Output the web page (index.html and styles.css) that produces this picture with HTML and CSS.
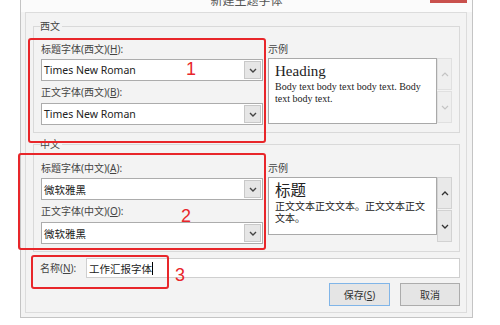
FILE: index.html
```html
<!DOCTYPE html>
<html lang="zh-CN">
<head>
  <meta charset="UTF-8">
  <title>新建主题字体</title>
  <link rel="stylesheet" href="styles.css">
</head>
<body>
  <div class="window">
    <div class="titlebar">
      <span></span>
      <span class="title">新建主题字体</span>
      <span class="close"></span>
    </div>

    <div class="panel">
      <!-- 西文 -->
      <div class="group group-latin">
        <div class="group-head"><span class="group-title">西文</span></div>
        <div class="group-body">
          <div class="fields">
            <div class="field-label">标题字体(西文)(<u>H</u>):</div>
            <div class="select">
              <span class="select-value">Times New Roman</span>
              <span class="drop"><svg width="8" height="5" viewBox="0 0 8 5"><path d="M1 1 L4 4 L7 1" fill="none" stroke="#444" stroke-width="1.4"/></svg></span>
            </div>
            <div class="field-label">正文字体(西文)(<u>B</u>):</div>
            <div class="select">
              <span class="select-value">Times New Roman</span>
              <span class="drop"><svg width="8" height="5" viewBox="0 0 8 5"><path d="M1 1 L4 4 L7 1" fill="none" stroke="#444" stroke-width="1.4"/></svg></span>
            </div>
          </div>
          <div class="sample">
            <div class="field-label">示例</div>
            <div class="sample-row">
              <div class="sample-box serif">
                <div class="sample-head">Heading</div>
                <div class="sample-body">Body text body text body text. Body text body text.</div>
              </div>
              <div class="scroll disabled">
                <span class="scroll-btn"><svg width="8" height="5" viewBox="0 0 8 5"><path d="M1 4 L4 1 L7 4" fill="none" stroke="currentColor" stroke-width="1.2"/></svg></span>
                <span class="scroll-btn"><svg width="8" height="5" viewBox="0 0 8 5"><path d="M1 1 L4 4 L7 1" fill="none" stroke="currentColor" stroke-width="1.2"/></svg></span>
              </div>
            </div>
          </div>
        </div>
      </div>

      <!-- 中文 -->
      <div class="group group-cjk">
        <div class="group-head"><span class="group-title">中文</span></div>
        <div class="group-body">
          <div class="fields">
            <div class="field-label">标题字体(中文)(<u>A</u>):</div>
            <div class="select">
              <span class="select-value">微软雅黑</span>
              <span class="drop"><svg width="8" height="5" viewBox="0 0 8 5"><path d="M1 1 L4 4 L7 1" fill="none" stroke="#444" stroke-width="1.4"/></svg></span>
            </div>
            <div class="field-label">正文字体(中文)(<u>O</u>):</div>
            <div class="select">
              <span class="select-value">微软雅黑</span>
              <span class="drop"><svg width="8" height="5" viewBox="0 0 8 5"><path d="M1 1 L4 4 L7 1" fill="none" stroke="#444" stroke-width="1.4"/></svg></span>
            </div>
          </div>
          <div class="sample">
            <div class="field-label">示例</div>
            <div class="sample-row">
              <div class="sample-box sample-box-short">
                <div class="sample-head">标题</div>
                <div class="sample-body">正文文本正文文本。正文文本正文文本。</div>
              </div>
              <div class="scroll">
                <span class="scroll-btn"><svg width="8" height="5" viewBox="0 0 8 5"><path d="M1 4 L4 1 L7 4" fill="none" stroke="currentColor" stroke-width="1.3"/></svg></span>
                <span class="scroll-btn"><svg width="8" height="5" viewBox="0 0 8 5"><path d="M1 1 L4 4 L7 1" fill="none" stroke="currentColor" stroke-width="1.3"/></svg></span>
              </div>
            </div>
          </div>
        </div>
      </div>

      <div class="name-row">
        <span class="field-label">名称(<u>N</u>):</span>
        <div class="name-input">工作汇报字体<span class="caret"></span></div>
      </div>

      <div class="actions">
        <button class="btn btn-default">保存(<u>S</u>)</button>
        <button class="btn">取消</button>
      </div>
    </div>
  </div>

  <!-- marcações vermelhas -->
  <div class="mark mark-1"></div>
  <div class="mark mark-2"></div>
  <div class="mark mark-3"></div>
  <span class="mark-num num-1">1</span>
  <span class="mark-num num-2">2</span>
  <span class="mark-num num-3">3</span>
</body>
</html>
```

FILE: styles.css
```css
/* GERAL */
body {
  margin: 0;
  background: #fff;
  font-family: "Noto Sans", "Noto Sans CJK SC", sans-serif;
  font-size: 10px;
  color: #444;
  overflow: hidden;
}

/* JANELA */
.window {
  box-sizing: border-box;
  width: 453px;
  height: 336px;
  margin: -18px 0 0 20px;
  border: 1px solid #c4c4c4;
  background: #f3f3f3;
}

.titlebar {
  display: grid;
  grid-template-columns: 1fr auto 1fr;
  height: 29px;
  background: #fbfbfb;
}

.title {
  align-self: center;
  padding-top: 4px;
  font-size: 12px;
  color: #555;
  font-family: "Noto Sans CJK SC", sans-serif;
}

.close {
  justify-self: end;
  width: 37px;
  height: 20px;
  margin-right: 5px;
  background: #c9514d;
}

.panel {
  margin: 0 5px 0 4px;
  padding: 0 6px 6px 7px;
  border: 1px solid #dcdcdc;
  background: #f3f3f3;
}

/* GRUPOS */
.group-latin {
  margin-top: 6px;
}

.group-cjk {
  margin-top: 4px;
}

.group-head {
  display: flex;
  height: 14px;
}

.group-head::before,
.group-head::after {
  content: "";
  align-self: flex-end;
  height: 6px;
  border-top: 1px solid #d9d9d9;
}

.group-head::before {
  width: 6px;
  border-left: 1px solid #d9d9d9;
}

.group-head::after {
  flex: 1;
  margin-left: 2px;
  border-right: 1px solid #d9d9d9;
}

.group-title {
  line-height: 14px;
  color: #444;
}

.group-body {
  display: grid;
  grid-template-columns: 222px 184px;
  column-gap: 5px;
  padding: 9px 7px 7px 7px;
  border: 1px solid #d9d9d9;
  border-top: none;
}

.group-cjk .group-body {
  padding-top: 10px;
}

.field-label {
  line-height: 14px;
  white-space: nowrap;
}

.fields .field-label + .select {
  margin-top: 3px;
}

.fields .select + .field-label {
  margin-top: 4px;
}

.fields .select:last-child {
  margin-top: 4px;
}

/* SELECT */
.select {
  box-sizing: border-box;
  display: flex;
  align-items: center;
  height: 22px;
  padding: 1px;
  border: 1px solid #acacac;
  background: #fff;
}

.select-value {
  flex: 1;
  padding-left: 1px;
  font-size: 10.5px;
  color: #222;
}

.drop {
  box-sizing: border-box;
  display: flex;
  align-items: center;
  justify-content: center;
  width: 17px;
  height: 18px;
  border: 1px solid #c8c8c8;
  background: #e6e6e6;
}

/* EXEMPLO */
.sample-row {
  display: flex;
  align-items: flex-start;
  margin-top: 2px;
}

.sample-box {
  box-sizing: border-box;
  width: 170px;
  height: 66px;
  padding: 2px 6px;
  border: 1px solid #a9a9a9;
  background: #fff;
  color: #222;
}

.sample-box-short {
  height: 58px;
}

.sample-box.serif {
  font-family: "Liberation Serif", serif;
}

.sample-head {
  font-size: 15.5px;
  line-height: 20px;
}

.sample-box.serif .sample-head {
  font-size: 15px;
}

.sample-body {
  font-size: 10px;
  line-height: 12px;
}

.scroll {
  display: flex;
  flex-direction: column;
  gap: 1px;
  width: 15px;
  color: #333;
}

.scroll.disabled {
  color: #c4c4c4;
}

.scroll-btn {
  box-sizing: border-box;
  display: flex;
  align-items: center;
  justify-content: center;
  height: 32px;
  border: 1px solid #d2d2d2;
  background: #e9e9e9;
}

.scroll.disabled .scroll-btn {
  background: #efefef;
  border-color: #e0e0e0;
}

/* NOME */
.name-row {
  display: grid;
  grid-template-columns: 46px 1fr;
  align-items: center;
  margin-top: 6px;
  padding-left: 7px;
}

.name-input {
  box-sizing: border-box;
  display: flex;
  align-items: center;
  height: 20px;
  padding-left: 2px;
  border: 1px solid #cfcfcf;
  background: #fff;
  font-size: 10.5px;
  color: #222;
}

.caret {
  width: 1px;
  height: 13px;
  background: #000;
}

/* BOTÕES */
.actions {
  display: flex;
  justify-content: flex-end;
  gap: 10px;
  margin-top: 5px;
}

.btn {
  box-sizing: border-box;
  width: 60px;
  height: 23px;
  padding: 0;
  border: 1px solid #acacac;
  background: #e5e5e5;
  font-family: inherit;
  font-size: 10px;
  color: #333;
}

.btn-default {
  width: 61px;
  border-color: #80b5e8;
}

/* MARCAÇÕES */
.mark {
  position: absolute;
  border: 2px solid #e8262a;
  border-radius: 3px;
}

.mark-1 {
  left: 28px;
  top: 38px;
  width: 234px;
  height: 101px;
}

.mark-2 {
  left: 18px;
  top: 153px;
  width: 244px;
  height: 93px;
}

.mark-3 {
  left: 31px;
  top: 255px;
  width: 134px;
  height: 30px;
}

.mark-num {
  position: absolute;
  font-family: "Liberation Sans", sans-serif;
  font-size: 18px;
  line-height: 18px;
  color: #e8262a;
}

.num-1 { left: 186px; top: 60px; }
.num-2 { left: 181px; top: 207px; }
.num-3 { left: 175px; top: 266px; }
```
